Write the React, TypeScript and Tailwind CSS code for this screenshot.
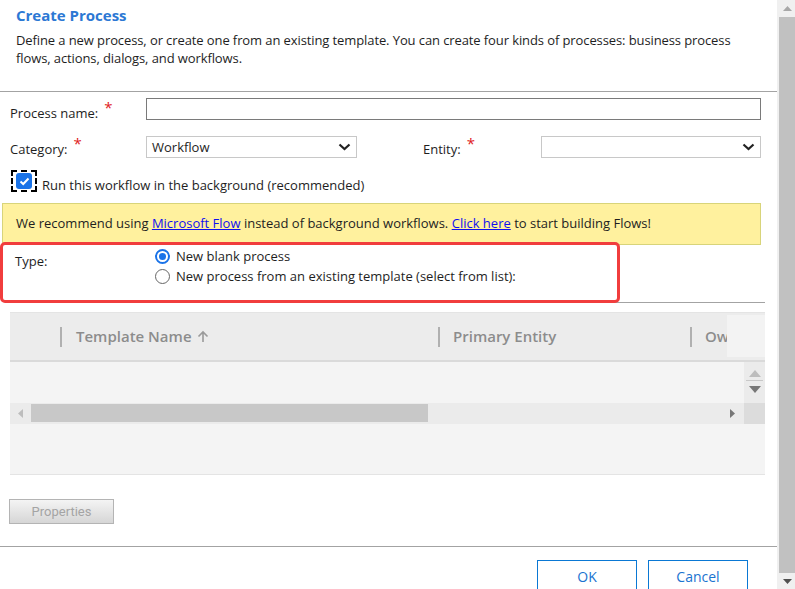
import React from "react";

const Chevron = () => (
  <svg width="13" height="8" viewBox="0 0 13 8" className="shrink-0">
    <polyline points="1.5,1.5 6.5,6 11.5,1.5" fill="none" stroke="#222" strokeWidth="2.2" />
  </svg>
);

const Star = () => <span className="text-[#e0201c] text-[15px] leading-none relative -top-[4px] ml-[6px]">*</span>;

export default function App() {
  return (
    <div className="flex items-start w-[795px] h-[589px] overflow-hidden bg-white text-[#1e1e1e]" style={{ fontFamily: '"Open Sans", "Noto Sans", Arial, sans-serif' }}>
      <div className="w-[777px] shrink-0 relative flex flex-col">
        {/* Header */}
        <div className="pt-[5px] px-[16px]">
          <div className="text-[15px] leading-[20px] font-bold text-[#2c78d4]">Create Process</div>
          <div className="mt-[6px] text-[13px] leading-[18px] tracking-[-0.1px]">
            Define a new process, or create one from an existing template. You can create four kinds of processes: business process flows, actions, dialogs, and workflows.
          </div>
        </div>
        <div className="mt-[24px] h-px bg-[#a3a3a3]" />

        {/* Process name */}
        <div className="mt-[6px] flex h-[22px]">
          <div className="w-[146px] pl-[10px] pt-[6px] text-[13px] leading-[18px] flex items-start">
            Process name:<Star />
          </div>
          <div className="w-[615px] h-[22px] border border-[#7a7a7a]" />
        </div>

        {/* Category / Entity */}
        <div className="mt-[16px] flex h-[22px]">
          <div className="w-[146px] pl-[10px] pt-[4px] text-[13px] leading-[18px] flex items-start">
            Category:<Star />
          </div>
          <div className="w-[211px] h-[22px] border border-[#c8c8c8] flex items-center justify-between pl-[5px] pr-[5px] text-[13px]">
            <span className="pt-[2px]">Workflow</span>
            <Chevron />
          </div>
          <div className="w-[184px] pl-[66px] pt-[4px] text-[13px] leading-[18px] flex items-start">
            Entity:<Star />
          </div>
          <div className="w-[220px] h-[22px] border border-[#c8c8c8] flex items-center justify-end pr-[5px]">
            <Chevron />
          </div>
        </div>

        {/* Checkbox */}
        <div className="mt-[12px] flex items-center h-[22px]">
          <div className="ml-[11px] w-[26px] h-[22px] border-2 border-dashed border-black flex items-center justify-center">
            <div className="w-[16px] h-[16px] rounded-[3px] bg-[#1a73e8] flex items-center justify-center">
              <svg width="11" height="9" viewBox="0 0 11 9">
                <polyline points="1.5,4.5 4.2,7 9.5,1.5" fill="none" stroke="white" strokeWidth="2" />
              </svg>
            </div>
          </div>
          <span className="ml-[5px] mt-[7px] text-[13px] leading-[18px]">Run this workflow in the background (recommended)</span>
        </div>

        {/* Yellow notice */}
        <div className="mt-[11px] ml-[2px] w-[759px] h-[42px] bg-[#fff19e] border border-[#d8d47a] flex items-center pl-[13px] text-[13px]">
          <span>
            We recommend using <span className="text-[#1010ee] underline">Microsoft Flow</span> instead of background workflows.{" "}
            <span className="text-[#1010ee] underline">Click here</span> to start building Flows!
          </span>
        </div>

        {/* Type */}
        <div className="relative h-[57px] flex">
          <div className="w-[155px] pl-[15px] pt-[7px] text-[13px] leading-[18px]">Type:</div>
          <div className="pt-[2px] flex flex-col gap-[2px] text-[13px] leading-[18px]">
            <div className="flex items-center gap-[6px]">
              <div className="w-[15px] h-[15px] rounded-full border-2 border-[#1a73e8] flex items-center justify-center">
                <div className="w-[7px] h-[7px] rounded-full bg-[#1a73e8]" />
              </div>
              <span>New blank process</span>
            </div>
            <div className="flex items-center gap-[6px]">
              <div className="w-[15px] h-[15px] rounded-full border border-[#666]" />
              <span>New process from an existing template (select from list):</span>
            </div>
          </div>
          <div className="absolute left-0 top-[-3px] w-[620px] h-[61px] border-[3px] border-[#f13d3d] rounded-[5px] pointer-events-none" />
        </div>
        <div className="ml-[10px] w-[755px] h-px bg-[#a3a3a3]" />

        {/* Grid */}
        <div className="mt-[9px] ml-[10px] w-[755px] h-[163px] bg-[#f4f4f4] border-t border-b border-[#e4e4e4] flex flex-col">
          <div className="relative h-[49px] shrink-0 bg-[#ececec] border-b-2 border-[#dadada] text-[15px] font-semibold text-[#8c8c8c]">
            <div className="absolute left-[50px] top-[14px] w-[2px] h-[20px] bg-[#b0b0b0]" />
            <div className="absolute left-[66px] top-[12px] flex items-center gap-[5px]">
              Template Name
              <svg width="12" height="13" viewBox="0 0 12 13">
                <path d="M6 12V2M1.5 6.5L6 2l4.5 4.5" fill="none" stroke="#9a9a9a" strokeWidth="1.6" />
              </svg>
            </div>
            <div className="absolute left-[428px] top-[14px] w-[2px] h-[20px] bg-[#b0b0b0]" />
            <div className="absolute left-[443px] top-[12px]">Primary Entity</div>
            <div className="absolute left-[680px] top-[14px] w-[2px] h-[20px] bg-[#b0b0b0]" />
            <div className="absolute left-[695px] top-[12px]">Owner</div>
            <div className="absolute left-[717px] top-[2px] w-[38px] h-[42px] bg-[#f3f3f3]" />
          </div>
          <div className="flex h-[41px] shrink-0">
            <div className="flex-1" />
            <div className="w-[21px] bg-[#ebebeb] flex flex-col items-center pt-[8px]">
              <svg width="12" height="7" viewBox="0 0 12 7"><polygon points="6,0 12,7 0,7" fill="#bdbdbd" /></svg>
              <div className="mt-[3px] w-[17px] h-px bg-[#c8c8c8]" />
              <svg className="mt-[5px]" width="12" height="7" viewBox="0 0 12 7"><polygon points="0,0 12,0 6,7" fill="#777" /></svg>
            </div>
          </div>
          <div className="flex h-[21px] shrink-0 bg-[#ebebeb]">
            <div className="w-[21px] flex items-center justify-center">
              <svg width="5" height="9" viewBox="0 0 5 9"><polygon points="5,0 5,9 0,4.5" fill="#bdbdbd" /></svg>
            </div>
            <div className="w-[397px] h-[18px] my-[1px] bg-[#c8c8c8]" />
            <div className="flex-1 flex items-center justify-end pr-[9px]">
              <svg width="5" height="9" viewBox="0 0 5 9"><polygon points="0,0 5,4.5 0,9" fill="#777" /></svg>
            </div>
            <div className="w-[21px] bg-[#dcdcdc]" />
          </div>
          <div className="flex-1" />
        </div>

        {/* Properties */}
        <div className="mt-[24px] ml-[9px] w-[105px] h-[25px] border border-[#b4b4b4] bg-gradient-to-b from-[#f4f4f4] to-[#d6d6d6] flex items-center justify-center text-[13px] text-[#a4a4a4]" style={{ fontFamily: 'Roboto, "Liberation Sans", sans-serif' }}>
          Properties
        </div>

        <div className="mt-[22px] h-px bg-[#a3a3a3]" />

        {/* Buttons */}
        <div className="mt-[13px] flex gap-[11px] pl-[537px]">
          <div className="w-[100px] h-[34px] border border-[#0a78d4] flex items-center justify-center pb-[2px] text-[14px] text-[#1a73d0]">OK</div>
          <div className="w-[100px] h-[34px] border border-[#0a78d4] flex items-center justify-center pb-[2px] text-[14px] text-[#1a73d0]">Cancel</div>
        </div>
      </div>

      {/* Page scrollbar */}
      <div className="w-[18px] h-[589px] shrink-0 bg-[#f0f0f0] flex flex-col items-end">
        <div className="w-[16px] h-[17px] flex items-center justify-center">
          <svg width="9" height="5" viewBox="0 0 9 5"><polygon points="4.5,0 9,5 0,5" fill="#a8a8a8" /></svg>
        </div>
        <div className="w-[16px] flex-1 bg-[#c1c1c1]" />
        <div className="w-[16px] h-[16px] flex items-center justify-center">
          <svg width="9" height="5" viewBox="0 0 9 5"><polygon points="0,0 9,0 4.5,5" fill="#505050" /></svg>
        </div>
      </div>
    </div>
  );
}
